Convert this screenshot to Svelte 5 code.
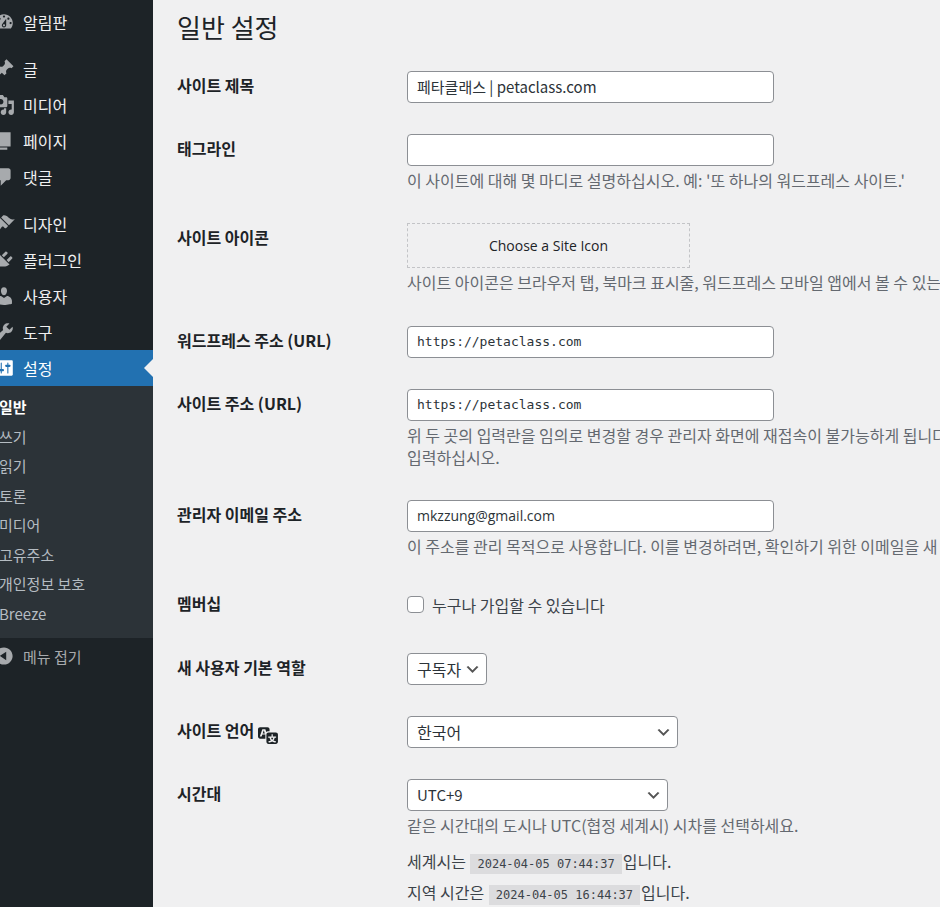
<script>
	const menuGroups = [
		[
			{
				label: '알림판',
				icon: 'M3.76 16h12.48c1.1-1.37 1.76-3.11 1.76-5 0-4.42-3.58-8-8-8s-8 3.58-8 8c0 1.89.66 3.63 1.76 5zM10 4c.55 0 1 .45 1 1s-.45 1-1 1-1-.45-1-1 .45-1 1-1zM6 6c.55 0 1 .45 1 1s-.45 1-1 1-1-.45-1-1 .45-1 1-1zm8 0c.55 0 1 .45 1 1s-.45 1-1 1-1-.45-1-1 .45-1 1-1zm-5.37 5.55L12 7v6c0 1.1-.9 2-2 2s-2-.9-2-2c0-.57.24-1.08.63-1.45zM4 10c.55 0 1 .45 1 1s-.45 1-1 1-1-.45-1-1 .45-1 1-1zm12 0c.55 0 1 .45 1 1s-.45 1-1 1-1-.45-1-1 .45-1 1-1zm-5 3c0-.55-.45-1-1-1s-1 .45-1 1 .45 1 1 1 1-.45 1-1z'
			}
		],
		[
			{
				label: '글',
				icon: 'M10.44 3.02l1.82-1.82 6.36 6.35-1.83 1.82c-1.05-.68-2.48-.57-3.41.36l-.75.75c-.92.93-1.04 2.35-.35 3.41l-1.83 1.82-2.41-2.41-2.8 2.79c-.42.42-3.38 2.71-3.8 2.29s1.86-3.39 2.28-3.81l2.79-2.79L4.1 9.36l1.83-1.82c1.05.69 2.48.57 3.4-.36l.75-.75c.93-.92 1.05-2.35.36-3.41z'
			},
			{
				label: '미디어',
				icon: 'M13 11V4c0-.55-.45-1-1-1h-1.67L9 1H5L3.67 3H2c-.55 0-1 .45-1 1v7c0 .55.45 1 1 1h10c.55 0 1-.45 1-1zM7 4.5c1.38 0 2.5 1.12 2.5 2.5S8.38 9.5 7 9.5 4.5 8.38 4.5 7 5.62 4.5 7 4.5zM14 6h5v10.5c0 1.38-1.12 2.5-2.5 2.5S14 17.88 14 16.5s1.12-2.5 2.5-2.5c.17 0 .34.02.5.05V9h-3V6zm-4 8.05V13h2v3.5c0 1.38-1.12 2.5-2.5 2.5S7 17.88 7 16.5 8.12 14 9.5 14c.17 0 .34.02.5.05z'
			},
			{
				label: '페이지',
				icon: 'M6 15V2h10v13H6zm-1 1h8v2H3V5h2v11z'
			},
			{
				label: '댓글',
				icon: 'M5 2h9c1.1 0 2 .9 2 2v7c0 1.1-.9 2-2 2h-2l-5 5v-5H5c-1.1 0-2-.9-2-2V4c0-1.1.9-2 2-2z'
			}
		],
		[
			{
				label: '디자인',
				icon: 'M14.48 11.06L7.41 3.99l1.5-1.5c.5-.56 2.3-.47 3.51.32 1.21.8 1.43 1.28 2.91 2.1 1.18.64 2.45 1.26 4.45.85zm-.71.71L6.7 4.7 4.93 6.47c-.39.39-.39 1.02 0 1.41l1.06 1.06c.39.39.39 1.03 0 1.42-.6.6-1.43 1.11-2.21 1.69-.35.26-.7.53-1.01.84C1.43 14.23.4 16.08 1.4 17.07c.99 1 2.84-.03 4.18-1.36.31-.31.58-.66.85-1.02.57-.78 1.08-1.61 1.69-2.21.39-.39 1.02-.39 1.41 0l1.06 1.06c.39.39 1.02.39 1.41 0z'
			},
			{
				label: '플러그인',
				icon: 'M13.11 4.36L9.87 7.6 8 5.73l3.24-3.24c.35-.34 1.05-.2 1.56.32.52.51.66 1.21.31 1.55zm-8 1.77l.91-1.12 9.01 9.01-1.19.84c-.71.71-2.63 1.16-3.82 1.16H6.14L4.9 17.26c-.59.59-1.54.59-2.12 0-.59-.58-.59-1.53 0-2.12l1.24-1.24v-3.88c0-1.13.4-3.19 1.09-3.89zm7.26 3.97l3.24-3.24c.34-.35 1.04-.21 1.55.31.52.51.66 1.21.31 1.55l-3.24 3.25z'
			},
			{
				label: '사용자',
				icon: 'M10 9.25c-2.27 0-2.73-3.44-2.73-3.44C7 4.02 7.82 2 9.97 2c2.16 0 2.98 2.02 2.71 3.81 0 0-.41 3.44-2.68 3.44zm0 2.57L12.72 10c2.39 0 4.52 2.33 4.52 4.53v2.49s-3.65 1.13-7.24 1.13c-3.65 0-7.24-1.13-7.24-1.13v-2.49c0-2.25 1.94-4.48 4.47-4.48z'
			},
			{
				label: '도구',
				icon: 'M16.68 9.77c-1.34 1.34-3.3 1.67-4.95.99l-5.41 6.52c-.99.99-2.59.99-3.58 0s-.99-2.59 0-3.57l6.52-5.42c-.68-1.65-.35-3.61.99-4.95 1.28-1.28 3.12-1.62 4.72-1.06l-2.89 2.89 2.82 2.82 2.86-2.87c.53 1.58.18 3.39-1.08 4.65zM3.81 16.21c.4.39 1.04.39 1.43 0 .4-.4.4-1.04 0-1.43-.39-.4-1.03-.4-1.43 0-.39.39-.39 1.03 0 1.43z'
			},
			{
				label: '설정',
				current: true,
				icon: 'M18 16V4c0-.55-.45-1-1-1H3c-.55 0-1 .45-1 1v12c0 .55.45 1 1 1h14c.55 0 1-.45 1-1zM8 11h1c.55 0 1 .45 1 1s-.45 1-1 1H8v1.5c0 .28-.22.5-.5.5s-.5-.22-.5-.5V13H6c-.55 0-1-.45-1-1s.45-1 1-1h1V5.5c0-.28.22-.5.5-.5s.5.22.5.5V11zm5-2h-1c-.55 0-1-.45-1-1s.45-1 1-1h1V5.5c0-.28.22-.5.5-.5s.5.22.5.5V7h1c.55 0 1 .45 1 1s-.45 1-1 1h-1v5.5c0 .28-.22.5-.5.5s-.5-.22-.5-.5V9z'
			}
		]
	];

	const submenu = ['일반', '쓰기', '읽기', '토론', '미디어', '고유주소', '개인정보 보호', 'Breeze'];

	let currentPage = $state('일반');
	let siteTitle = $state('페타클래스 | petaclass.com');
	let tagline = $state('');
	let wpUrl = $state('https://petaclass.com');
	let siteUrl = $state('https://petaclass.com');
	let adminEmail = $state('mkzzung@gmail.com');
	let canRegister = $state(false);
	let role = $state('구독자');
	let language = $state('한국어');
	let timezone = $state('UTC+9');
</script>

<div class="page">
	<nav class="sidebar">
		<div class="menu">
			{#each menuGroups as group}
				<ul class="group">
					{#each group as item}
						<li>
							<a class="menu-item" class:current={item.current} href="#menu">
								<svg viewBox="0 0 20 20" aria-hidden="true"><path d={item.icon} /></svg>
								<span>{item.label}</span>
							</a>
						</li>
					{/each}
				</ul>
			{/each}

			<ul class="submenu">
				{#each submenu as name}
					<li>
						<a
							href="#settings"
							class:active={currentPage === name}
							onclick={() => (currentPage = name)}>{name}</a
						>
					</li>
				{/each}
			</ul>

			<button type="button" class="menu-item collapse">
				<svg viewBox="0 0 20 20" aria-hidden="true">
					<path
						fill-rule="evenodd"
						d="M10 2.16c4.33 0 7.84 3.51 7.84 7.84s-3.51 7.84-7.84 7.84S2.16 14.33 2.16 10 5.71 2.16 10 2.16zm2 11.72V6.12L6.18 9.97z"
					/>
				</svg>
				<span>메뉴 접기</span>
			</button>
		</div>
	</nav>

	<main>
		<h1>일반 설정</h1>

		<form>
			<div class="row">
				<label class="title" for="blogname">사이트 제목</label>
				<div class="field">
					<input id="blogname" type="text" bind:value={siteTitle} />
				</div>
			</div>

			<div class="row">
				<label class="title" for="tagline">태그라인</label>
				<div class="field">
					<input id="tagline" type="text" bind:value={tagline} />
					<p class="description">
						이 사이트에 대해 몇 마디로 설명하십시오. 예: '또 하나의 워드프레스 사이트.'
					</p>
				</div>
			</div>

			<div class="row">
				<label class="title" for="site-icon">사이트 아이콘</label>
				<div class="field">
					<button id="site-icon" type="button" class="upload">Choose a Site Icon</button>
					<p class="description">
						사이트 아이콘은 브라우저 탭, 북마크 표시줄, 워드프레스 모바일 앱에서 볼 수 있는
					</p>
				</div>
			</div>

			<div class="row">
				<label class="title" for="siteurl">워드프레스 주소 (URL)</label>
				<div class="field">
					<input id="siteurl" class="code" type="url" bind:value={wpUrl} />
				</div>
			</div>

			<div class="row">
				<label class="title" for="home">사이트 주소 (URL)</label>
				<div class="field">
					<input id="home" class="code" type="url" bind:value={siteUrl} />
					<p class="description">
						위 두 곳의 입력란을 임의로 변경할 경우 관리자 화면에 재접속이 불가능하게 됩니다.<br />
						입력하십시오.
					</p>
				</div>
			</div>

			<div class="row">
				<label class="title" for="email">관리자 이메일 주소</label>
				<div class="field">
					<input id="email" class="latin" type="email" bind:value={adminEmail} />
					<p class="description">
						이 주소를 관리 목적으로 사용합니다. 이를 변경하려면, 확인하기 위한 이메일을 새
					</p>
				</div>
			</div>

			<div class="row">
				<span class="title">멤버십</span>
				<div class="field">
					<label class="check">
						<input type="checkbox" bind:checked={canRegister} />
						누구나 가입할 수 있습니다
					</label>
				</div>
			</div>

			<div class="row">
				<label class="title" for="role">새 사용자 기본 역할</label>
				<div class="field">
					<select id="role" class="role" bind:value={role}>
						<option>구독자</option>
					</select>
				</div>
			</div>

			<div class="row">
				<label class="title" for="language">
					사이트 언어
					<svg viewBox="0 0 20 20" aria-hidden="true">
						<path
							d="M11 7H9.49c-.63 0-1.25.3-1.59.7L7 5H4.13l-2.39 7h1.69l.74-2H7v4H2c-1.1 0-2-.9-2-2V5c0-1.1.9-2 2-2h7c1.1 0 2 .9 2 2v2zM6.51 9H4.49l1-2.93zM10 8h7c1.1 0 2 .9 2 2v7c0 1.1-.9 2-2 2h-7c-1.1 0-2-.9-2-2v-7c0-1.1.9-2 2-2zm7.25 5v-1.08h-3.17V9.75h-1.16v2.17H9.75V13h1.28c.11.85.56 1.85 1.28 2.62-.87.36-1.89.62-2.31.62-.01.02.22.97.2 1.46.84 0 2.21-.5 3.28-1.15 1.09.65 2.48 1.15 3.34 1.15-.02-.49.2-1.44.2-1.46-.43 0-1.49-.27-2.38-.63.7-.77 1.14-1.77 1.25-2.61h1.36zm-3.81 1.93c-.5-.46-.85-1.13-1.01-1.93h2.09c-.17.8-.51 1.47-1 1.93l-.04.03s-.03-.02-.04-.03z"
						/>
					</svg>
				</label>
				<div class="field">
					<select id="language" class="language" bind:value={language}>
						<option>한국어</option>
					</select>
				</div>
			</div>

			<div class="row">
				<label class="title" for="timezone">시간대</label>
				<div class="field">
					<select id="timezone" class="timezone" bind:value={timezone}>
						<option>UTC+9</option>
					</select>
					<p class="description">같은 시간대의 도시나 UTC(협정 세계시) 시차를 선택하세요.</p>
					<p class="time">세계시는 <code>2024-04-05 07:44:37</code>입니다.</p>
					<p class="time">지역 시간은 <code>2024-04-05 16:44:37</code>입니다.</p>
				</div>
			</div>
		</form>
	</main>
</div>

<style>
	:global(body) {
		margin: 0;
		background: #f0f0f1;
		overflow: hidden;
	}

	.page {
		display: flex;
		min-height: 100vh;
		font-family: 'Noto Sans CJK KR', sans-serif;
		font-size: 16px;
		line-height: 22px;
		color: #3c434a;
	}

	/* sidebar */
	.sidebar {
		flex: 0 0 153px;
		background: #1d2327;
		overflow: hidden;
	}

	.menu {
		margin-left: -7px;
		padding-top: 4px;
	}

	ul {
		list-style: none;
		margin: 0;
		padding: 0;
	}

	.group + .group {
		margin-top: 11px;
	}

	.menu-item {
		position: relative;
		display: flex;
		align-items: center;
		gap: 8px;
		width: 100%;
		height: 36px;
		color: #f0f0f1;
		text-decoration: none;
	}

	.menu-item svg {
		flex: none;
		width: 22px;
		height: 22px;
		fill: #a7aaad;
	}

	.menu-item.current {
		background: #2271b1;
		color: #fff;
	}

	.menu-item.current svg {
		fill: #fff;
	}

	.menu-item.current::after {
		content: '';
		position: absolute;
		right: 0;
		top: 9px;
		border: 9px solid transparent;
		border-left-width: 0;
		border-right-color: #f0f0f1;
	}

	.submenu {
		display: flex;
		flex-direction: column;
		justify-content: space-between;
		box-sizing: border-box;
		height: 252px;
		padding: 6px 6px 10px;
		background: #2c3338;
		font-size: 15px;
	}

	.submenu a {
		display: block;
		line-height: 29px;
		color: #b5bcc2;
		text-decoration: none;
		white-space: nowrap;
	}

	.submenu a.active {
		color: #fff;
		font-weight: 600;
	}

	.collapse {
		padding: 0;
		border: none;
		background: none;
		font-family: inherit;
		font-size: 15px;
		color: #a7aaad;
		cursor: pointer;
	}

	/* settings form */
	main {
		flex: 1;
		min-width: 0;
		padding-left: 24px;
		overflow: hidden;
	}

	h1 {
		margin: 0;
		padding: 11px 0 13px;
		font-size: 26px;
		font-weight: 400;
		line-height: 32px;
		color: #1d2327;
	}

	.row {
		display: grid;
		grid-template-columns: 230px 1fr;
	}

	.title {
		padding-top: 18px;
		font-weight: 600;
		color: #1d2327;
	}

	.title svg {
		width: 21px;
		height: 21px;
		fill: #1d2327;
		vertical-align: -8px;
	}

	.field {
		min-width: 0;
		padding: 15px 0 16px;
		white-space: nowrap;
	}

	input,
	select {
		display: block;
		box-sizing: border-box;
		height: 32px;
		margin: 0;
		padding: 0 9px 1px;
		border: 1px solid #8c8f94;
		border-radius: 4px;
		background-color: #fff;
		color: #2c3338;
		font-family: inherit;
		font-size: 15px;
	}

	input {
		width: 100%;
		max-width: 367px;
	}

	input.latin {
		font-family: 'Open Sans', sans-serif;
		font-size: 14px;
	}

	input.code {
		font-family: 'DejaVu Sans Mono', monospace;
		font-size: 13px;
	}

	select {
		appearance: none;
		background-image: url("data:image/svg+xml,%3Csvg xmlns='http://www.w3.org/2000/svg' viewBox='0 0 20 20'%3E%3Cpath d='M5 6l5 5 5-5 2 1-7 7-7-7 2-1z' fill='%23555'/%3E%3C/svg%3E");
		background-repeat: no-repeat;
		background-position: right 5px center;
		background-size: 17px 17px;
		font-size: 16px;
	}

	.role {
		width: 80px;
	}

	.language {
		width: 271px;
	}

	.timezone {
		width: 261px;
		font-size: 15px;
	}

	.upload {
		display: block;
		width: 283px;
		height: 45px;
		padding: 0;
		border: 1px dashed #c3c4c7;
		background: none;
		font-family: 'Open Sans', sans-serif;
		font-size: 14px;
		color: #1d2327;
		cursor: pointer;
	}

	.check {
		display: flex;
		align-items: center;
		gap: 8px;
		height: 31px;
		margin-bottom: 2px;
	}

	.check input {
		appearance: none;
		width: 17px;
		height: 17px;
		padding: 0;
	}

	.check input:checked {
		background-color: #2271b1;
	}

	p {
		margin: 0;
	}

	.description {
		margin-top: 3px;
		margin-bottom: 1px;
		color: #646970;
	}

	.upload + .description {
		margin-bottom: 2px;
	}

	.time {
		margin-top: 9px;
	}

	.description + .time {
		margin-top: 14px;
	}

	code {
		margin: 0 1px;
		padding: 3px 7px;
		background: #dcdcde;
		font-family: 'DejaVu Sans Mono', monospace;
		font-size: 12px;
		line-height: 12px;
	}
</style>
